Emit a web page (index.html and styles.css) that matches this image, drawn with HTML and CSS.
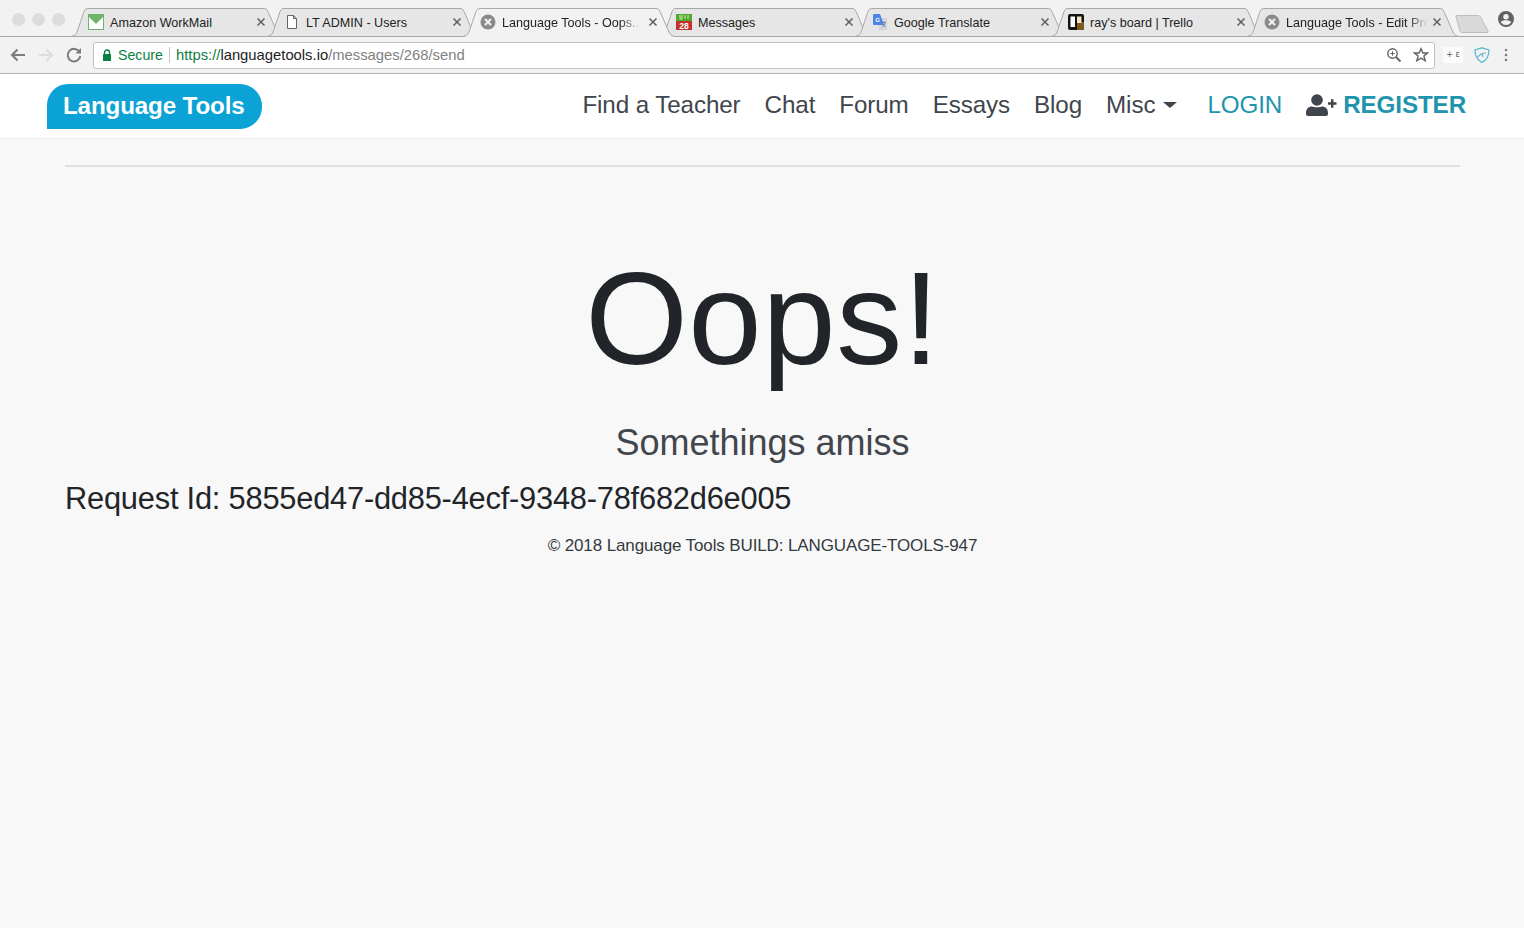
FILE: index.html
```html
<!DOCTYPE html>
<html lang="en">
<head>
<meta charset="utf-8">
<title>Language Tools - Oops!</title>
<link rel="stylesheet" href="styles.css">
</head>
<body>
<svg class="defs" width="0" height="0" aria-hidden="true">
  <defs>
    <symbol id="tabshape" viewBox="0 0 210 28" overflow="visible">
      <path d="M0 28C3 28 4 26 5 24L12 3.500C13 1 14 .5 17 .5L191 .5C194 .5 195 1 196 3.500L205 24C206 26 207 28 210 28"/>
    </symbol>
    <symbol id="close" viewBox="0 0 10 10">
      <path d="M1.500 1.500L8.500 8.500M8.500 1.500L1.500 8.500" fill="none" stroke="#5f5f5f" stroke-width="1.500"/>
    </symbol>
    <symbol id="sad" viewBox="0 0 16 16">
      <circle cx="8" cy="8" r="7.500" fill="#8a8a8a"/>
      <path d="M5 5L11 11M11 5L5 11" stroke="#efefef" stroke-width="2"/>
    </symbol>
  </defs>
</svg>

<header class="browser">
  <div class="tabstrip">
    <div class="lights"><i></i><i></i><i></i></div>
    <div class="tabs">
      <div class="tab">
        <svg class="shape"><use href="#tabshape"/></svg>
        <svg class="fav" viewBox="0 0 16 16"><rect x=".5" y=".5" width="15" height="15" fill="#fff" stroke="#6db46a"/><path d="M1 1H15V3L8 10L1 3Z" fill="#6db46a"/></svg>
        <span class="label">Amazon WorkMail</span>
        <svg class="close"><use href="#close"/></svg>
      </div>
      <div class="tab">
        <svg class="shape"><use href="#tabshape"/></svg>
        <svg class="fav" viewBox="0 0 16 16"><path d="M3.500 1.500H9.500L12.500 4.500V14.500H3.500ZM9.500 1.500V4.500H12.500" fill="#fff" stroke="#666"/></svg>
        <span class="label">LT ADMIN - Users</span>
        <svg class="close"><use href="#close"/></svg>
      </div>
      <div class="tab active">
        <svg class="shape"><use href="#tabshape"/></svg>
        <svg class="fav"><use href="#sad"/></svg>
        <span class="label faded">Language Tools - Oops...</span>
        <svg class="close"><use href="#close"/></svg>
      </div>
      <div class="tab">
        <svg class="shape"><use href="#tabshape"/></svg>
        <svg class="fav" viewBox="0 0 16 16"><rect width="16" height="16" fill="#52a82e"/><rect y="7" width="16" height="9" fill="#c5302a"/><path d="M4 1V5M4 5H6V1M9 1V5M12 1V5" stroke="#cfe8b8" fill="none"/><text x="8" y="15" class="favnum">28</text></svg>
        <span class="label">Messages</span>
        <svg class="close"><use href="#close"/></svg>
      </div>
      <div class="tab">
        <svg class="shape"><use href="#tabshape"/></svg>
        <svg class="fav" viewBox="0 0 16 16"><path d="M6 4H15V16H7Z" fill="#d3d6dc"/><path d="M1 1C1 .5 1.500 0 2 0H8L12 11H2C1.500 11 1 10.500 1 10Z" fill="#4a86e8"/><text x="5.500" y="8" class="favg">G</text><path d="M10 8.500H14M12 7.500V9M10.500 13L13.500 9M10.800 10L13.500 13" stroke="#6b7a90" fill="none" stroke-width=".8"/></svg>
        <span class="label">Google Translate</span>
        <svg class="close"><use href="#close"/></svg>
      </div>
      <div class="tab">
        <svg class="shape"><use href="#tabshape"/></svg>
        <svg class="fav" viewBox="0 0 16 16"><rect width="16" height="16" rx="2" fill="#17120c"/><rect x="9" y="8" width="7" height="8" fill="#7c5a1e"/><rect x="2.500" y="2.500" width="4.500" height="10.500" fill="#fff"/><rect x="9" y="2.500" width="4.500" height="6.500" fill="#f1e4c8"/></svg>
        <span class="label">ray's board | Trello</span>
        <svg class="close"><use href="#close"/></svg>
      </div>
      <div class="tab">
        <svg class="shape"><use href="#tabshape"/></svg>
        <svg class="fav"><use href="#sad"/></svg>
        <span class="label tight">Language Tools - Edit Pro</span>
        <svg class="close"><use href="#close"/></svg>
      </div>
    </div>
    <svg class="newtab" viewBox="0 0 34 18"><path d="M1 1.500C1 1 1.500 .5 2 .5H23C24 .5 25 1 25.500 2L33 16C33.300 17 33 17.500 32 17.500H7C6 17.500 5.500 17 5 16Z" fill="#d9d9d9" stroke="#bdbdbd"/></svg>
    <svg class="profile" viewBox="0 0 16 16"><path fill-rule="evenodd" d="M8 0a8 8 0 1 0 0 16A8 8 0 0 0 8 0ZM8 3a2.700 2.700 0 1 1 0 5.400A2.700 2.700 0 0 1 8 3ZM8 14a6 6 0 0 1-5-2.600C3 9.800 6.300 9.300 8 9.300s5 .5 5 2.100A6 6 0 0 1 8 14Z" fill="#5f6368"/></svg>
  </div>
  <div class="toolbar">
    <svg class="tool" viewBox="0 0 28 20"><path d="M21 10H8M13.500 4.500L8 10L13.500 15.500" fill="none" stroke="#7b7b7b" stroke-width="2"/></svg>
    <svg class="tool" viewBox="0 0 28 20"><path d="M7 10H20M14.500 4.500L20 10L14.500 15.500" fill="none" stroke="#dcdcdc" stroke-width="2"/></svg>
    <svg class="tool" viewBox="0 0 28 20"><path d="M19.500 7A6.300 6.300 0 1 0 20.300 11" fill="none" stroke="#7b7b7b" stroke-width="2"/><path d="M21 3V8.500H15.500Z" fill="#7b7b7b"/></svg>
    <div class="omnibox">
      <svg class="lock" viewBox="0 0 10 12"><path d="M2.500 5.500V3.500a2.500 2.500 0 0 1 5 0V5.500" fill="none" stroke="#0b8043" stroke-width="1.400"/><rect x="1" y="5" width="8" height="7" rx=".6" fill="#0b8043"/></svg>
      <span class="secure">Secure</span>
      <span class="url"><span class="scheme">https://</span><span class="domain">languagetools.io</span><span class="path">/messages/268/send</span></span>
      <svg class="zoomicon" viewBox="0 0 16 16"><circle cx="6.500" cy="6.500" r="4.700" fill="none" stroke="#5f6368" stroke-width="1.400"/><path d="M10 10L14.500 14.500" stroke="#5f6368" stroke-width="1.800"/><path d="M4.300 6.500H8.700M6.500 4.300V8.700" stroke="#5f6368"/></svg>
      <svg class="star" viewBox="0 0 16 16"><path d="M8 1.800L9.900 6H14.500L10.900 9L12.200 13.800L8 11.100L3.800 13.800L5.100 9L1.500 6H6.100Z" fill="none" stroke="#5f6368" stroke-width="1.400"/></svg>
    </div>
    <span class="ext">+ ε</span>
    <svg class="shield" viewBox="0 0 16 16"><path d="M8 .8L15 3C15 9 13 13 8 15.300C3 13 1 9 1 3Z" fill="none" stroke="#63b9d1" stroke-width="1.300"/><path d="M3.500 10L8 6.500L12 6M8 6.500L9 10" fill="none" stroke="#63b9d1" stroke-width="1.200"/></svg>
    <svg class="dots" viewBox="0 0 4 14"><circle cx="2" cy="2" r="1.300"/><circle cx="2" cy="7" r="1.300"/><circle cx="2" cy="12" r="1.300"/></svg>
  </div>
</header>

<nav class="navbar">
  <a class="brand" href="#">Language Tools</a>
  <div class="navlinks">
    <a href="#">Find a Teacher</a>
    <a href="#">Chat</a>
    <a href="#">Forum</a>
    <a href="#">Essays</a>
    <a href="#">Blog</a>
    <a href="#" class="dropdown">Misc<i class="caret"></i></a>
    <a href="#" class="login">LOGIN</a>
    <a href="#" class="register">
      <svg class="usericon" viewBox="0 0 31 22"><circle cx="11" cy="6" r="5.800"/><path d="M0 19C0 14.500 3 12.500 6 12.500C8 13.500 14 13.500 16 12.500C19 12.500 22 14.500 22 19V20C22 21 21 22 20 22H2C1 22 0 21 0 20Z"/><path d="M22 9.500H30.500M26.250 5.200V13.800" fill="none" stroke="#3f454c" stroke-width="2.400"/></svg>
      <span>REGISTER</span>
    </a>
  </div>
</nav>

<main class="content">
  <hr class="rule">
  <h1 class="oops">Oops!</h1>
  <h2 class="amiss">Somethings amiss</h2>
  <p class="request">Request Id: 5855ed47-dd85-4ecf-9348-78f682d6e005</p>
  <footer class="foot">© 2018 Language Tools BUILD: LANGUAGE-TOOLS-947</footer>
</main>
</body>
</html>
```
FILE: styles.css
```css
* { box-sizing: border-box; }
html, body { margin: 0; height: 100%; }
body {
  background: #f8f8f8;
  font-family: "Liberation Sans", Arial, sans-serif;
  color: #212529;
  overflow: hidden;
}
.defs { position: absolute; }

/* Browser chrome */
.browser { background: #f2f2f2; border-bottom: 1px solid #b4b4b4; }
.tabstrip {
  display: flex;
  position: relative;
  height: 37px;
  padding-top: 8px;
  border-bottom: 1px solid #a9a9a9;
}
.lights { display: flex; gap: 7px; width: 72px; padding: 5px 0 0 12px; }
.lights i { width: 13px; height: 13px; border-radius: 50%; background: #dcdcdc; }
.tabs { display: flex; width: 1372px; }
.tab {
  position: relative;
  display: flex;
  align-items: center;
  width: 196px;
  height: 28px;
  padding-left: 16px;
  font-size: 12.600px;
  color: #222;
}
.shape {
  position: absolute;
  left: 0;
  top: 0;
  width: 210px;
  height: 28px;
  fill: #e6e6e6;
  stroke: #a9a9a9;
  overflow: visible;
}
.tab.active { z-index: 2; }
.tab.active .shape { fill: #f2f2f2; }
.tab.active::after {
  content: "";
  position: absolute;
  left: 1px;
  top: 28px;
  width: 208px;
  height: 1px;
  background: #f2f2f2;
}
.fav { position: relative; width: 16px; height: 16px; flex: none; }
.favnum { font: bold 8.500px "Liberation Sans", sans-serif; fill: #fff; text-anchor: middle; }
.favg { font: bold 6px "Liberation Sans", sans-serif; fill: #fff; text-anchor: middle; }
.label {
  position: relative;
  width: 138px;
  margin-left: 6px;
  padding-top: 1px;
  white-space: nowrap;
}
.faded {
  -webkit-mask-image: linear-gradient(to right, #000 118px, transparent 140px);
  mask-image: linear-gradient(to right, #000 118px, transparent 140px);
}
.tight {
  width: 145px;
  margin-right: -7px;
  -webkit-mask-image: linear-gradient(to right, #000 122px, transparent 142px);
  mask-image: linear-gradient(to right, #000 122px, transparent 142px);
}
.close { position: relative; width: 10px; height: 10px; margin-left: 8px; flex: none; }
.newtab { width: 34px; height: 18px; margin: 7px 0 0 11px; flex: none; }
.profile { position: absolute; left: 1498px; top: 11px; width: 16px; height: 16px; }

.toolbar { display: flex; align-items: center; height: 36px; padding: 0 0 0 4px; }
.tool { width: 28px; height: 20px; flex: none; }
.omnibox {
  display: flex;
  align-items: center;
  width: 1342px;
  height: 27px;
  margin-left: 5px;
  padding-left: 8px;
  background: #fff;
  border: 1px solid #c2c2c2;
  border-radius: 3px;
  font-size: 14.200px;
}
.lock { width: 10px; height: 12px; flex: none; }
.secure { margin-left: 6px; padding-right: 6px; border-right: 1px solid #c4c4c4; line-height: 16px; color: #0b8043; }
.url { flex: 1; margin-left: 6px; font-size: 14.800px; white-space: nowrap; }
.scheme { color: #0b8043; }
.domain { color: #222; }
.path { color: #808080; }
.zoomicon { width: 16px; height: 16px; margin-right: 11px; flex: none; }
.star { width: 16px; height: 16px; margin-right: 5px; flex: none; }
.ext {
  width: 20px;
  margin-left: 8px;
  background: #fbfbfb;
  font: 8px/16px "DejaVu Sans", sans-serif;
  color: #555;
  text-align: center;
}
.shield { width: 16px; height: 16px; margin-left: 11px; flex: none; }
.dots { width: 4px; height: 14px; margin-left: 14px; fill: #7b7b7b; flex: none; }

/* Site navbar */
.navbar {
  display: flex;
  align-items: center;
  justify-content: space-between;
  height: 65px;
  padding: 0 58px 0 47px;
  background: #fff;
  border-bottom: 1px solid #ececec;
}
.brand {
  width: 215px;
  height: 45px;
  padding-left: 16px;
  background: #0ba2d5;
  border-radius: 21px 22px 22px 0;
  color: #fff;
  font-size: 24.200px;
  font-weight: 700;
  line-height: 44px;
  letter-spacing: -.15px;
  text-decoration: none;
  white-space: nowrap;
}
.navlinks {
  display: flex;
  align-items: center;
  gap: 24px;
  padding-bottom: 2px;
  font-size: 24.200px;
  letter-spacing: -.1px;
}
.navlinks a { color: #3f454c; text-decoration: none; white-space: nowrap; }
.dropdown { display: flex; align-items: center; margin-right: 6px; }
.caret {
  width: 0;
  height: 0;
  margin-left: 8px;
  border-top: 6px solid #3f454c;
  border-left: 7px solid transparent;
  border-right: 7px solid transparent;
}
.navlinks .login { color: #2194ad; }
.register { display: flex; align-items: center; gap: 6px; }
.usericon { width: 31px; height: 22px; fill: #3f454c; flex: none; }
.register span { color: #2194ad; font-weight: 700; }

/* Error page */
.content { padding: 26px 64px 0 65px; text-align: center; }
.rule { height: 2px; margin: 0; border: 0; background: #e0e0e0; }
.oops { margin: 73px 0 0; font-size: 132px; font-weight: 400; line-height: 158px; letter-spacing: .5px; color: #212529; }
.amiss { margin: 24px 0 0; font-size: 36px; font-weight: 400; line-height: 42px; color: #41464d; }
.request { margin: 16px 0 0; font-size: 30.800px; line-height: 37px; letter-spacing: -.21px; text-align: left; color: #212529; }
.foot { margin-top: 18px; font-size: 17px; line-height: 21px; letter-spacing: -.12px; color: #343a40; }
```
